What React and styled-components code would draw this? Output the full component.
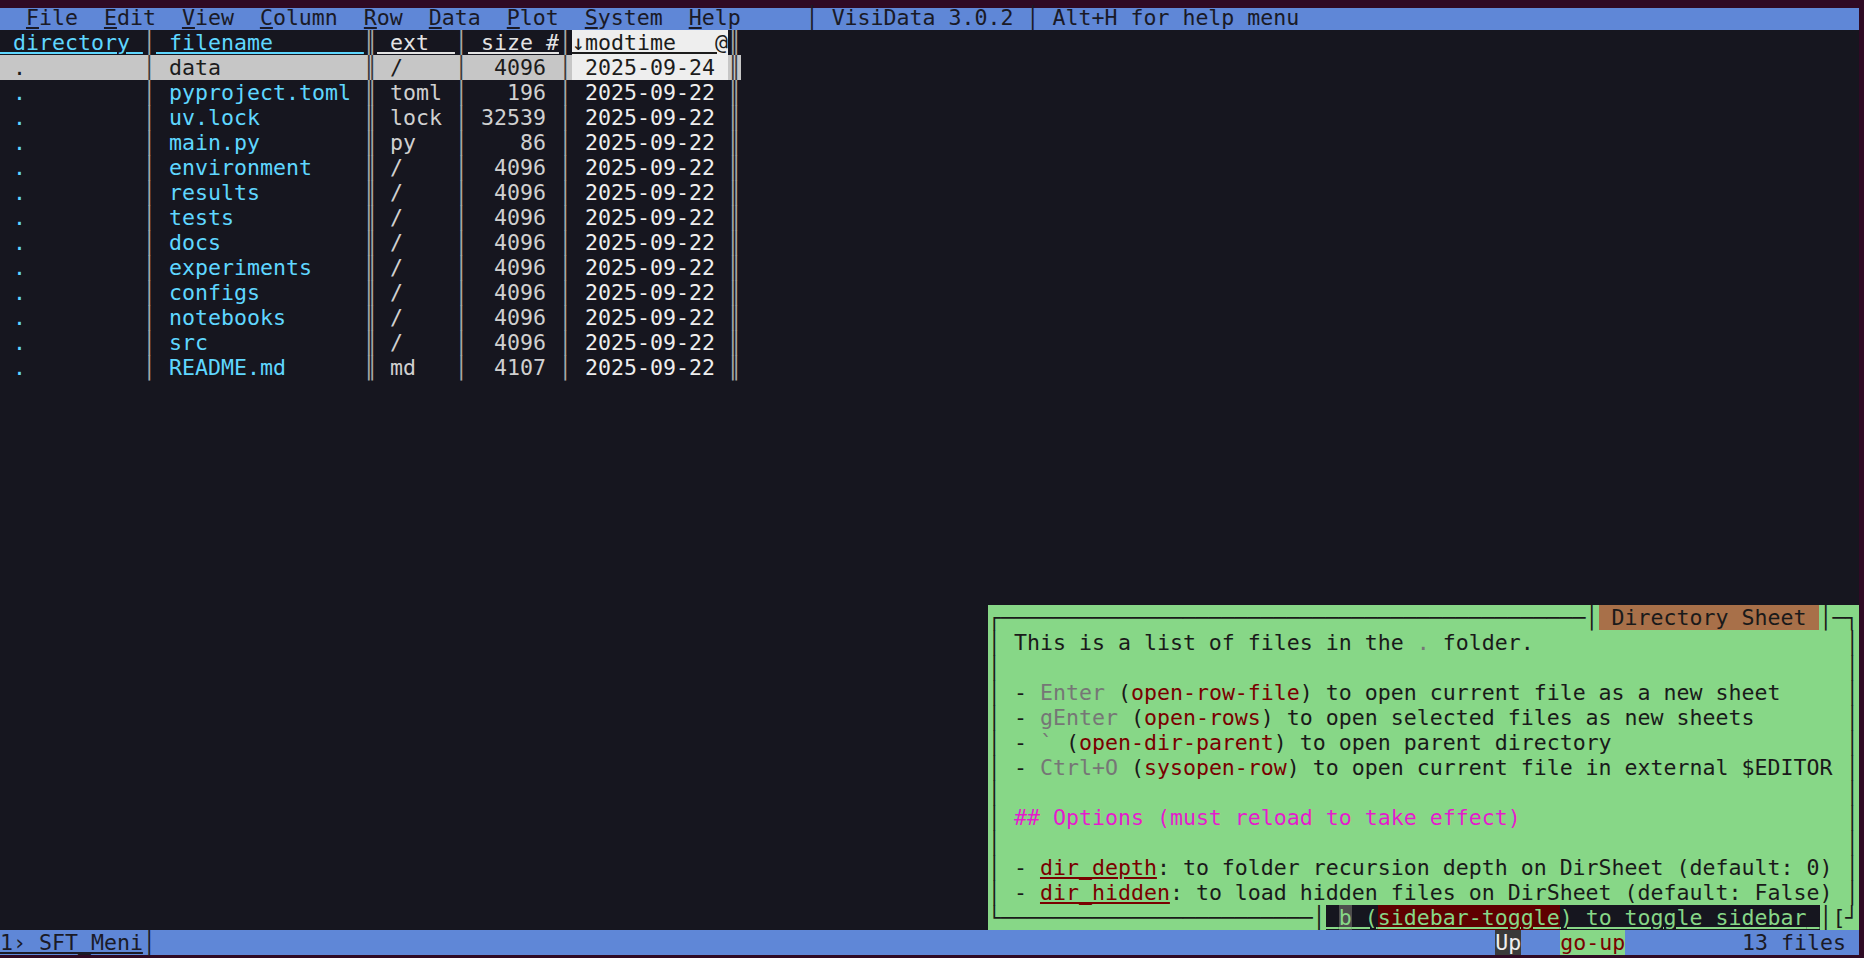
import React from 'react';
import styled, { createGlobalStyle } from 'styled-components';

const CW = 13;
const RH = 25;
const ch = (n) => `${n * CW}px`;

const GlobalStyle = createGlobalStyle`
  html, body {
    margin: 0;
    padding: 0;
    background: #2f0a24;
  }
  body {
    font-family: "DejaVu Sans Mono", "Liberation Mono", monospace;
    font-size: 21.59px;
    line-height: ${RH}px;
  }
`;

const Screen = styled.div`
  width: 1864px;
  height: 958px;
  overflow: hidden;
  background: #2f0a24;
  padding-top: 5px;
  box-sizing: border-box;
`;

const Term = styled.div`
  width: ${ch(143)};
  height: ${38 * RH}px;
  background: #16161f;
  display: flex;
  flex-direction: column;
  white-space: pre;
`;

const MenuBar = styled.div`
  height: ${RH}px;
  flex: none;
  display: flex;
  color: #1a1a26;
  background: linear-gradient(#2f0a24 0 3px, #5f87d7 3px);
`;

const MenuItem = styled.span`
  & > u {
    text-decoration: underline;
    text-underline-offset: 2px;
  }
`;

const Main = styled.div`
  flex: 1;
  display: flex;
  flex-direction: column;
  justify-content: space-between;
`;

const TEMPLATE = `${ch(11)} ${ch(1)} ${ch(16)} ${ch(1)} ${ch(6)} ${ch(1)} ${ch(7)} ${ch(1)} ${ch(12)} ${ch(1)}`;

const Table = styled.div`
  display: flex;
  flex-direction: column;
`;

const Row = styled.div`
  display: grid;
  grid-template-columns: ${TEMPLATE};
  height: ${RH}px;
  width: fit-content;
  background: ${(p) => (p.$cursor ? '#c6c6c6' : 'transparent')};
  color: ${(p) => (p.$cursor ? '#1c1c1c' : '#d0d0d0')};
`;

const Cell = styled.span`
  overflow: hidden;
  color: ${(p) => p.$color || 'inherit'};
  background: ${(p) => p.$bg || 'transparent'};
  text-align: ${(p) => (p.$right ? 'right' : 'left')};
`;

const HeadCell = styled(Cell)`
  text-decoration: underline;
  text-decoration-thickness: 1.5px;
  text-underline-offset: 2px;
`;

const Sep = styled.span`
  color: ${(p) => (p.$cursor ? '#3a3a3a' : '#a8a8a8')};
`;

const Sidebar = styled.div`
  align-self: flex-end;
  width: ${ch(67)};
  background: #87d787;
  color: #1a1a1a;
  display: flex;
  flex-direction: column;
`;

const BoxLine = styled.div`
  display: flex;
  height: ${RH}px;
`;

const BoxText = styled.span`
  flex: 1;
  padding-left: ${ch(1)};
  overflow: hidden;
`;

const Title = styled.span`
  background: #a87049;
  color: #1a1a1a;
`;

const Key = styled.span`
  color: #767676;
`;

const Cmd = styled.span`
  color: #7a0000;
  text-decoration: ${(p) => (p.$u ? 'underline' : 'none')};
  text-underline-offset: 2px;
`;

const Heading = styled.span`
  color: #e41ccc;
`;

const HelpHint = styled.span`
  background: #16161f;
  color: #87d787;
  text-decoration: underline;
  text-underline-offset: 2px;
`;

const HintKey = styled.span`
  background: #4e4e4e;
  color: #87d787;
`;

const HintCmd = styled.span`
  background: #5f0000;
  color: #87d787;
`;

const StatusBar = styled.div`
  height: ${RH}px;
  flex: none;
  display: flex;
  background: #5f87d7;
  color: #1a1a26;
`;

const SheetName = styled.span`
  text-decoration: underline;
  text-underline-offset: 2px;
`;

const RightStatus = styled.span`
  margin-left: auto;
`;

const KeyBadge = styled.span`
  background: #3a3a3a;
  color: #eeeeee;
`;

const CmdBadge = styled.span`
  background: #87d787;
  color: #7a0000;
`;

const files = [
  ['data', '/', 4096, '2025-09-24'],
  ['pyproject.toml', 'toml', 196, '2025-09-22'],
  ['uv.lock', 'lock', 32539, '2025-09-22'],
  ['main.py', 'py', 86, '2025-09-22'],
  ['environment', '/', 4096, '2025-09-22'],
  ['results', '/', 4096, '2025-09-22'],
  ['tests', '/', 4096, '2025-09-22'],
  ['docs', '/', 4096, '2025-09-22'],
  ['experiments', '/', 4096, '2025-09-22'],
  ['configs', '/', 4096, '2025-09-22'],
  ['notebooks', '/', 4096, '2025-09-22'],
  ['src', '/', 4096, '2025-09-22'],
  ['README.md', 'md', 4107, '2025-09-22'],
];

const menus = ['File', 'Edit', 'View', 'Column', 'Row', 'Data', 'Plot', 'System', 'Help'];

const CYAN = '#5fd7ff';

function Menu() {
  return (
    <MenuBar>
      <span>{'  '}</span>
      {menus.map((m) => (
        <MenuItem key={m}>
          <u>{m[0]}</u>
          {m.slice(1) + '  '}
        </MenuItem>
      ))}
      <span>{'   │ VisiData 3.0.2 │ Alt+H for help menu'}</span>
    </MenuBar>
  );
}

function Sheet() {
  return (
    <Table>
      <Row>
        <HeadCell $color={CYAN}>{' directory '}</HeadCell>
        <Sep>│</Sep>
        <HeadCell $color={CYAN}>{' filename'.padEnd(16)}</HeadCell>
        <Sep>║</Sep>
        <HeadCell $color="#e4e4e4">{' ext'.padEnd(6)}</HeadCell>
        <Sep>│</Sep>
        <HeadCell $color="#e4e4e4">{' size #'}</HeadCell>
        <Sep>│</Sep>
        <HeadCell $color="#1c1c1c" $bg="#eeeeee">{'↓modtime   @'}</HeadCell>
        <Sep>║</Sep>
      </Row>
      {files.map(([name, ext, size, date], i) => {
        const cur = i === 0;
        return (
          <Row key={name} $cursor={cur}>
            <Cell $color={cur ? null : CYAN}>{' .'}</Cell>
            <Sep $cursor={cur}>│</Sep>
            <Cell $color={cur ? null : CYAN}>{' ' + name}</Cell>
            <Sep $cursor={cur}>║</Sep>
            <Cell>{' ' + ext}</Cell>
            <Sep $cursor={cur}>│</Sep>
            <Cell>{String(size).padStart(6) + ' '}</Cell>
            <Sep $cursor={cur}>│</Sep>
            <Cell $color={cur ? '#1c1c1c' : '#eeeeee'} $bg={cur ? '#eeeeee' : null}>
              {' ' + date + ' '}
            </Cell>
            <Sep $cursor={cur}>║</Sep>
          </Row>
        );
      })}
    </Table>
  );
}

function SideLine({ children }) {
  return (
    <BoxLine>
      <span>│</span>
      <BoxText>{children}</BoxText>
      <span>│</span>
    </BoxLine>
  );
}

function HelpSidebar() {
  return (
    <Sidebar>
      <BoxLine>
        {'┌' + '─'.repeat(45) + '│'}
        <Title>{' Directory Sheet '}</Title>
        {'│─┐'}
      </BoxLine>
      <SideLine>
        This is a list of files in the <Key>.</Key> folder.
      </SideLine>
      <SideLine />
      <SideLine>
        - <Key>Enter</Key> (<Cmd>open-row-file</Cmd>) to open current file as a new sheet
      </SideLine>
      <SideLine>
        - <Key>gEnter</Key> (<Cmd>open-rows</Cmd>) to open selected files as new sheets
      </SideLine>
      <SideLine>
        - <Key>`</Key> (<Cmd>open-dir-parent</Cmd>) to open parent directory
      </SideLine>
      <SideLine>
        - <Key>Ctrl+O</Key> (<Cmd>sysopen-row</Cmd>) to open current file in external $EDITOR
      </SideLine>
      <SideLine />
      <SideLine>
        <Heading>## Options (must reload to take effect)</Heading>
      </SideLine>
      <SideLine />
      <SideLine>
        - <Cmd $u>dir_depth</Cmd>: to folder recursion depth on DirSheet (default: 0)
      </SideLine>
      <SideLine>
        - <Cmd $u>dir_hidden</Cmd>: to load hidden files on DirSheet (default: False)
      </SideLine>
      <BoxLine>
        {'└' + '─'.repeat(24) + '│'}
        <HelpHint>
          {' '}
          <HintKey>b</HintKey> (<HintCmd>sidebar-toggle</HintCmd>) to toggle sidebar{' '}
        </HelpHint>
        {'│[┘'}
      </BoxLine>
    </Sidebar>
  );
}

export default function App() {
  return (
    <>
      <GlobalStyle />
      <Screen>
        <Term>
          <Menu />
          <Main>
            <Sheet />
            <HelpSidebar />
          </Main>
          <StatusBar>
            <SheetName>1› SFT_Meni</SheetName>
            <span>│</span>
            <RightStatus>
              <KeyBadge>Up</KeyBadge>
              {'   '}
              <CmdBadge>go-up</CmdBadge>
              {'         13 files '}
            </RightStatus>
          </StatusBar>
        </Term>
      </Screen>
    </>
  );
}
